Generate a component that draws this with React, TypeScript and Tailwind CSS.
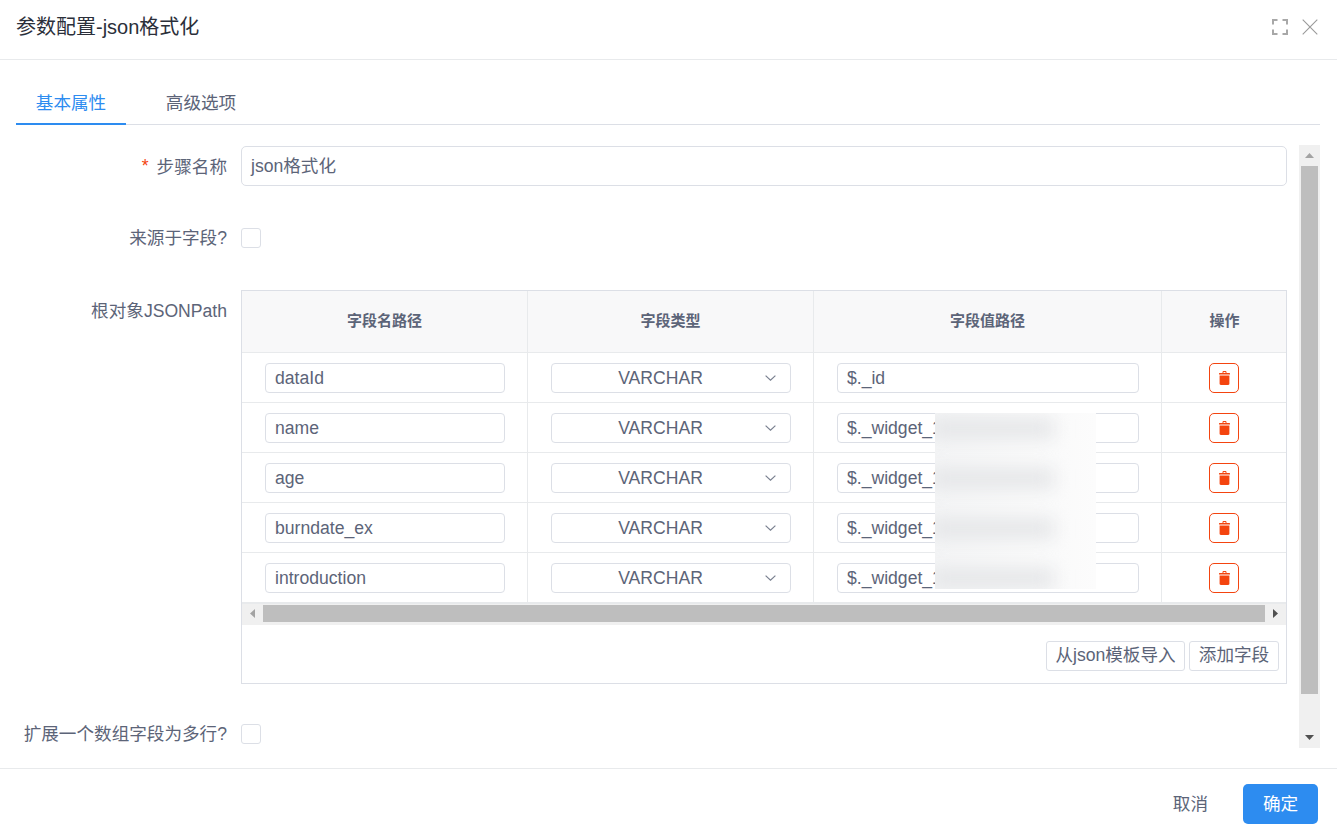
import React from 'react';

const fieldRows = [
  { name: 'dataId', path: '$._id' },
  { name: 'name', path: '$._widget_1' },
  { name: 'age', path: '$._widget_1' },
  { name: 'burndate_ex', path: '$._widget_1' },
  { name: 'introduction', path: '$._widget_1' },
];

const Triangle = ({ dir, color }: { dir: 'up' | 'down' | 'left' | 'right'; color: string }) => {
  const points = {
    up: '0,5 9,5 4.5,0',
    down: '0,0 9,0 4.5,5',
    left: '5,0 5,9 0,4.5',
    right: '0,0 0,9 5,4.5',
  }[dir];
  const vertical = dir === 'up' || dir === 'down';
  return (
    <svg width={vertical ? 9 : 5} height={vertical ? 5 : 9} viewBox={vertical ? '0 0 9 5' : '0 0 5 9'}>
      <polygon points={points} fill={color} />
    </svg>
  );
};

const TrashIcon = () => (
  <svg width="11" height="14" viewBox="0 0 11 14" fill="#f4440f">
    <path d="M3.5 1.2C3.5.5 4 0 4.7 0h1.6c.7 0 1.2.5 1.2 1.2V2H10.5c.3 0 .5.2.5.5V3.4H0V2.5C0 2.2.2 2 .5 2H3.5zM4.5 1.1V2h2v-.9z" />
    <path d="M.6 4.4h9.8v8.4c0 .7-.5 1.2-1.2 1.2H1.8c-.7 0-1.2-.5-1.2-1.2z" />
  </svg>
);

const Checkbox = () => <div className="w-5 h-5 bg-white border border-[#dcdfe6] rounded-[3px]" />;

const Label = ({ children }: { children: React.ReactNode }) => (
  <div className="w-[211px] shrink-0 text-right mr-[14px]">{children}</div>
);

export default function App() {
  return (
    <div
      className="w-[1337px] h-[835px] bg-white flex flex-col overflow-hidden text-[17.6px] text-[#5c6478]"
      style={{ fontFamily: '"Liberation Sans", "Noto Sans CJK SC", sans-serif' }}
    >
      <header className="h-[60px] shrink-0 border-b border-[#e8eaec] pl-4 pr-[19px] flex items-center justify-between">
        <h1 className="text-[20px] font-normal text-[#2b2f3a] -mt-[6px]">参数配置-json格式化</h1>
        <div className="flex items-center gap-[14px] -mt-[6px]">
          <svg width="16" height="16" viewBox="0 0 16 16" fill="none" stroke="#a8a8a8" strokeWidth="2">
            <path d="M1 5.5V1h4.5M10.5 1H15v4.5M15 10.5V15h-4.5M5.5 15H1v-4.5" />
          </svg>
          <svg width="16" height="16" viewBox="0 0 16 16" fill="none" stroke="#9a9a9a" strokeWidth="1.1">
            <path d="M.7.7l14.6 14.6M15.3.7L.7 15.3" />
          </svg>
        </div>
      </header>

      <div className="flex-1 min-h-0 pl-4 pr-[17px] flex flex-col">
        <nav className="mt-6 h-[41px] shrink-0 flex border-b border-[#dcdfe6]">
          <div className="w-[110px] h-[41px] pt-[6px] text-center text-[#2d8cf0] border-b-2 border-[#2d8cf0]">基本属性</div>
          <div className="w-[110px] ml-[20px] pt-[6px] text-center">高级选项</div>
        </nav>

        <div className="mt-5 flex h-[603px]">
          <div className="flex-1 min-w-0 pt-px overflow-hidden">
            <div className="flex items-center h-10">
              <Label>
                <span className="text-[#f4440f] mr-2">*</span>
                <span className="relative top-px">步骤名称</span>
              </Label>
              <div className="w-[1046px] h-10 pl-[9px] pt-px flex items-center border border-[#dcdfe6] rounded-[5px]">json格式化</div>
            </div>

            <div className="flex items-center h-5 mt-[42px]">
              <Label>来源于字段?</Label>
              <Checkbox />
            </div>

            <div className="flex mt-[42px]">
              <div className="w-[211px] shrink-0 text-right mr-[14px] pt-2">根对象JSONPath</div>
              <div className="w-[1046px] h-[394px] border border-[#dcdfe6]">
                <div className="grid grid-cols-[286px_286px_348px_125px] h-[62px] bg-[#f8f8f9] border-b border-[#e8eaec] text-[15px] font-bold">
                  <div className="flex items-center justify-center border-r border-[#e8eaec]">字段名路径</div>
                  <div className="flex items-center justify-center border-r border-[#e8eaec]">字段类型</div>
                  <div className="flex items-center justify-center border-r border-[#e8eaec]">字段值路径</div>
                  <div className="flex items-center justify-center">操作</div>
                </div>

                <div className="relative">
                  {fieldRows.map((row) => (
                    <div key={row.name} className="grid grid-cols-[286px_286px_348px_125px] h-[50px] border-b border-[#e8eaec] last:border-b-0 last:h-[49px]">
                      <div className="border-r border-[#e8eaec] pl-[23px] pt-[10px]">
                        <div className="w-60 h-[30px] pl-[9px] flex items-center border border-[#dcdfe6] rounded-[4px]">{row.name}</div>
                      </div>
                      <div className="border-r border-[#e8eaec] pl-[23px] pt-[10px]">
                        <div className="w-60 h-[30px] flex items-center justify-between border border-[#dcdfe6] rounded-[4px] pr-[14px]">
                          <span className="flex-1 text-center pl-[13px] pr-[9px]">VARCHAR</span>
                          <svg width="11" height="6" viewBox="0 0 11 6" fill="none" stroke="#7a8190" strokeWidth="1.2">
                            <path d="M.6.6l4.9 4.6L10.4.6" />
                          </svg>
                        </div>
                      </div>
                      <div className="border-r border-[#e8eaec] pl-[23px] pt-[10px]">
                        <div className="w-[302px] h-[30px] pl-[9px] flex items-center border border-[#dcdfe6] rounded-[4px]">{row.path}</div>
                      </div>
                      <div className="flex justify-center pt-[10px] pr-px">
                        <div className="w-[30px] h-[30px] flex items-center justify-center border border-[#f4440f] rounded-[5px]">
                          <TrashIcon />
                        </div>
                      </div>
                    </div>
                  ))}
                  {/* redacted values */}
                  <div className="absolute left-[693px] top-[60px] w-[161px] h-[176px] bg-linear-to-r from-[#f4f5f6] to-[#fcfcfc] overflow-hidden flex flex-col gap-[31px] pt-[6px]">
                    {[0, 1, 2, 3].map((i) => (
                      <div key={i} className="w-[125px] h-[19px] shrink-0 -ml-[6px] bg-[#e4e5e7] blur-[9px]" />
                    ))}
                  </div>
                </div>

                <div className="h-[22px] bg-[#f0f0f0] border-t border-[#e8eaec] flex items-start pt-px">
                  <div className="w-[21px] h-[17px] flex items-center justify-center"><Triangle dir="left" color="#a3a3a3" /></div>
                  <div className="w-[1002px] h-[17px] bg-[#bebebe]" />
                  <div className="flex-1 h-[17px] flex items-center justify-center"><Triangle dir="right" color="#505050" /></div>
                </div>

                <div className="flex justify-end gap-1 pr-[7px] pt-4">
                  <div className="h-[30px] w-[139px] pb-px flex items-center justify-center border border-[#dcdfe6] rounded-[3px]">从json模板导入</div>
                  <div className="h-[30px] w-[90px] pb-px flex items-center justify-center border border-[#dcdfe6] rounded-[3px]">添加字段</div>
                </div>
              </div>
            </div>

            <div className="flex items-center h-5 mt-10">
              <Label>扩展一个数组字段为多行?</Label>
              <Checkbox />
            </div>
          </div>

          <div className="w-[21px] shrink-0 ml-3 bg-[#f0f0f0] flex flex-col items-center">
            <div className="h-[21px] flex items-center justify-center"><Triangle dir="up" color="#a3a3a3" /></div>
            <div className="w-[17px] h-[528px] bg-[#bebebe]" />
            <div className="flex-1 flex items-end pb-2"><Triangle dir="down" color="#505050" /></div>
          </div>
        </div>
      </div>

      <footer className="h-[67px] shrink-0 border-t border-[#e8eaec] pr-[19px] pt-[15px] flex justify-end">
        <div className="h-10 flex items-center mr-[35px]">取消</div>
        <div className="w-[75px] h-10 flex items-center justify-center bg-[#2d8cf0] text-white rounded-[5px]">确定</div>
      </footer>
    </div>
  );
}
